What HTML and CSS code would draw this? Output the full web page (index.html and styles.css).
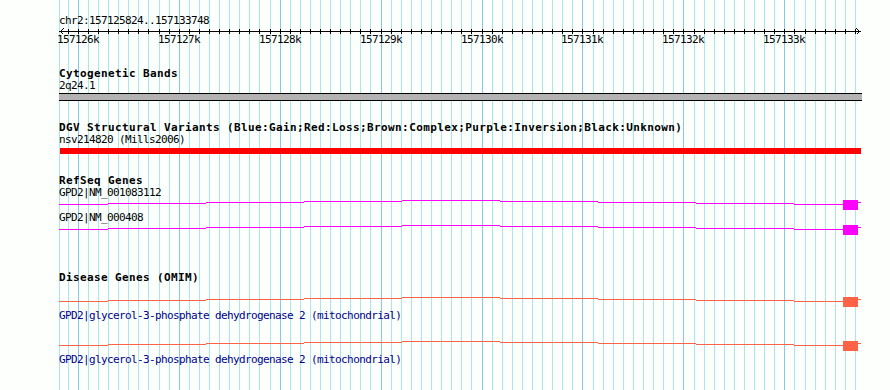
FILE: index.html
```html
<!DOCTYPE html>
<html>
<head>
<meta charset="utf-8">
<title>GBrowse details</title>
<link rel="stylesheet" href="styles.css">
</head>
<body>
<div class="browser">
  <svg class="grid" width="890" height="390" viewBox="0 0 890 390" shape-rendering="crispEdges">
    <path class="minor" d="M59.5 0V390M68.5 0V390M88.5 0V390M98.5 0V390M108.5 0V390M118.5 0V390M128.5 0V390M138.5 0V390M148.5 0V390M159.5 0V390M169.5 0V390M189.5 0V390M199.5 0V390M209.5 0V390M219.5 0V390M229.5 0V390M239.5 0V390M249.5 0V390M259.5 0V390M270.5 0V390M290.5 0V390M300.5 0V390M310.5 0V390M320.5 0V390M330.5 0V390M340.5 0V390M350.5 0V390M360.5 0V390M370.5 0V390M391.5 0V390M401.5 0V390M411.5 0V390M421.5 0V390M431.5 0V390M441.5 0V390M451.5 0V390M461.5 0V390M471.5 0V390M492.5 0V390M502.5 0V390M512.5 0V390M522.5 0V390M532.5 0V390M542.5 0V390M552.5 0V390M562.5 0V390M572.5 0V390M593.5 0V390M603.5 0V390M613.5 0V390M623.5 0V390M633.5 0V390M643.5 0V390M653.5 0V390M663.5 0V390M673.5 0V390M694.5 0V390M704.5 0V390M714.5 0V390M724.5 0V390M734.5 0V390M744.5 0V390M754.5 0V390M764.5 0V390M774.5 0V390M794.5 0V390M805.5 0V390M815.5 0V390M825.5 0V390M835.5 0V390M845.5 0V390M855.5 0V390"/>
    <path class="major" d="M78.5 0V390M179.5 0V390M280.5 0V390M381.5 0V390M482.5 0V390M582.5 0V390M683.5 0V390M784.5 0V390"/>
  </svg>

  <div class="content">
    <div class="label">chr2:157125824..157133748</div>
    <svg class="ruler" width="890" height="19" viewBox="0 0 890 19">
      <g shape-rendering="crispEdges" class="axis">
        <path d="M59 4.5H861"/>
        <path d="M68.5 2V7M78.5 2V7M88.5 2V7M98.5 2V7M108.5 2V7M118.5 2V7M128.5 2V7M138.5 2V7M148.5 2V7M159.5 2V7M169.5 2V7M179.5 2V7M189.5 2V7M199.5 2V7M209.5 2V7M219.5 2V7M229.5 2V7M239.5 2V7M249.5 2V7M259.5 2V7M270.5 2V7M280.5 2V7M290.5 2V7M300.5 2V7M310.5 2V7M320.5 2V7M330.5 2V7M340.5 2V7M350.5 2V7M360.5 2V7M370.5 2V7M381.5 2V7M391.5 2V7M401.5 2V7M411.5 2V7M421.5 2V7M431.5 2V7M441.5 2V7M451.5 2V7M461.5 2V7M471.5 2V7M482.5 2V7M492.5 2V7M502.5 2V7M512.5 2V7M522.5 2V7M532.5 2V7M542.5 2V7M552.5 2V7M562.5 2V7M572.5 2V7M582.5 2V7M593.5 2V7M603.5 2V7M613.5 2V7M623.5 2V7M633.5 2V7M643.5 2V7M653.5 2V7M663.5 2V7M673.5 2V7M683.5 2V7M694.5 2V7M704.5 2V7M714.5 2V7M724.5 2V7M734.5 2V7M744.5 2V7M754.5 2V7M764.5 2V7M774.5 2V7M784.5 2V7M794.5 2V7M805.5 2V7M815.5 2V7M825.5 2V7M835.5 2V7M845.5 2V7M855.5 2V7"/>
        <path d="M63.5 1.5L60.5 4.5L63.5 7.5M856.5 1.5L859.5 4.5L856.5 7.5" fill="none"/>
      </g>
      <g class="ticklabels" text-anchor="middle">
        <text x="78" y="16">157126k</text>
        <text x="179" y="16">157127k</text>
        <text x="280" y="16">157128k</text>
        <text x="381" y="16">157129k</text>
        <text x="482" y="16">157130k</text>
        <text x="582" y="16">157131k</text>
        <text x="683" y="16">157132k</text>
        <text x="784" y="16">157133k</text>
      </g>
    </svg>

    <section class="track cyto">
      <div class="title">Cytogenetic Bands</div>
      <div class="label">2q24.1</div>
      <div class="band"></div>
    </section>

    <section class="track dgv">
      <div class="title">DGV Structural Variants (Blue:Gain;Red:Loss;Brown:Complex;Purple:Inversion;Black:Unknown)</div>
      <div class="label">nsv214820 (Mills2006)</div>
      <div class="variant"></div>
    </section>

    <section class="track refseq">
      <div class="title">RefSeq Genes</div>
      <div class="feature">
        <div class="label">GPD2|NM_001083112</div>
        <svg class="glyph" width="890" height="13" viewBox="0 0 890 13" shape-rendering="crispEdges">
          <path class="hat" d="M59 5.5H108M108 4.5H206M206 3.5H304M304 2.5H402M402 1.5H500M500 2.5H598M598 3.5H696M696 4.5H794M794 5.5H843M858 3.5H861"/>
          <rect class="exon" x="843" y="1" width="15" height="10"/>
        </svg>
      </div>
      <div class="feature">
        <div class="label">GPD2|NM_000408</div>
        <svg class="glyph" width="890" height="13" viewBox="0 0 890 13" shape-rendering="crispEdges">
          <path class="hat" d="M59 5.5H108M108 4.5H206M206 3.5H304M304 2.5H402M402 1.5H500M500 2.5H598M598 3.5H696M696 4.5H794M794 5.5H843M858 3.5H861"/>
          <rect class="exon" x="843" y="1" width="15" height="10"/>
        </svg>
      </div>
    </section>

    <section class="track omim">
      <div class="title">Disease Genes (OMIM)</div>
      <div class="feature">
        <svg class="glyph" width="890" height="14" viewBox="0 0 890 14" shape-rendering="crispEdges">
          <path class="hat" d="M59 5.5H108M108 4.5H206M206 3.5H304M304 2.5H402M402 1.5H500M500 2.5H598M598 3.5H696M696 4.5H794M794 5.5H843M858 3.5H861"/>
          <rect class="exon" x="843" y="1" width="15" height="10"/>
        </svg>
        <div class="label">GPD2|glycerol-3-phosphate dehydrogenase 2 (mitochondrial)</div>
      </div>
      <div class="feature">
        <svg class="glyph" width="890" height="14" viewBox="0 0 890 14" shape-rendering="crispEdges">
          <path class="hat" d="M59 5.5H108M108 4.5H206M206 3.5H304M304 2.5H402M402 1.5H500M500 2.5H598M598 3.5H696M696 4.5H794M794 5.5H843M858 3.5H861"/>
          <rect class="exon" x="843" y="1" width="15" height="10"/>
        </svg>
        <div class="label">GPD2|glycerol-3-phosphate dehydrogenase 2 (mitochondrial)</div>
      </div>
    </section>
  </div>
</div>
</body>
</html>
```

FILE: styles.css
```css
* { box-sizing: border-box; }
html, body { margin: 0; padding: 0; background: #fff; }

.browser {
  position: relative;
  width: 890px;
  height: 390px;
  overflow: hidden;
  background: #fdfffd;
  font-family: "DejaVu Sans Mono", "Liberation Mono", monospace;
  color: #000;
}

.grid { position: absolute; left: 0; top: 0; display: block; }
.grid .minor { stroke: #a8e8ea; stroke-width: 1; }
.grid .major { stroke: #86c8ec; stroke-width: 1; }

.content { position: relative; padding-top: 15px; }

.label {
  padding-left: 59px;
  font-size: 11px;
  line-height: 12px;
  height: 12px;
  letter-spacing: -0.62px;
  white-space: nowrap;
}

.title {
  padding-left: 59px;
  font-size: 11px;
  font-weight: bold;
  line-height: 12px;
  height: 12px;
  letter-spacing: 0.38px;
  white-space: nowrap;
}

.ruler { display: block; }
.ruler .axis path { stroke: #000; stroke-width: 1; fill: none; }
.ruler .ticklabels {
  font-family: "DejaVu Sans Mono", "Liberation Mono", monospace;
  font-size: 11px;
  letter-spacing: -0.62px;
  fill: #000;
}

.glyph { display: block; }
.glyph .hat { fill: none; stroke-width: 1; }

.cyto { margin-top: 22px; }
.band {
  margin: 1px 0 0 59px;
  width: 803px;
  height: 8px;
  background: #b3b3b3;
  border-top: 1px solid #000;
  border-bottom: 1px solid #000;
}

.dgv { margin-top: 21px; }
.variant {
  margin: 2px 0 0 60px;
  width: 801px;
  height: 6px;
  background: #ff0000;
}

.refseq { margin-top: 21px; }
.refseq .hat { stroke: #ff00ff; }
.refseq .exon { fill: #ff00ff; }

.omim { margin-top: 35px; }
.omim .title { margin-bottom: 12px; }
.omim .feature + .feature { margin-top: 18px; }
.omim .label { color: #00008b; }
.omim .hat { stroke: #ff6347; }
.omim .exon { fill: #ff6347; }
```
